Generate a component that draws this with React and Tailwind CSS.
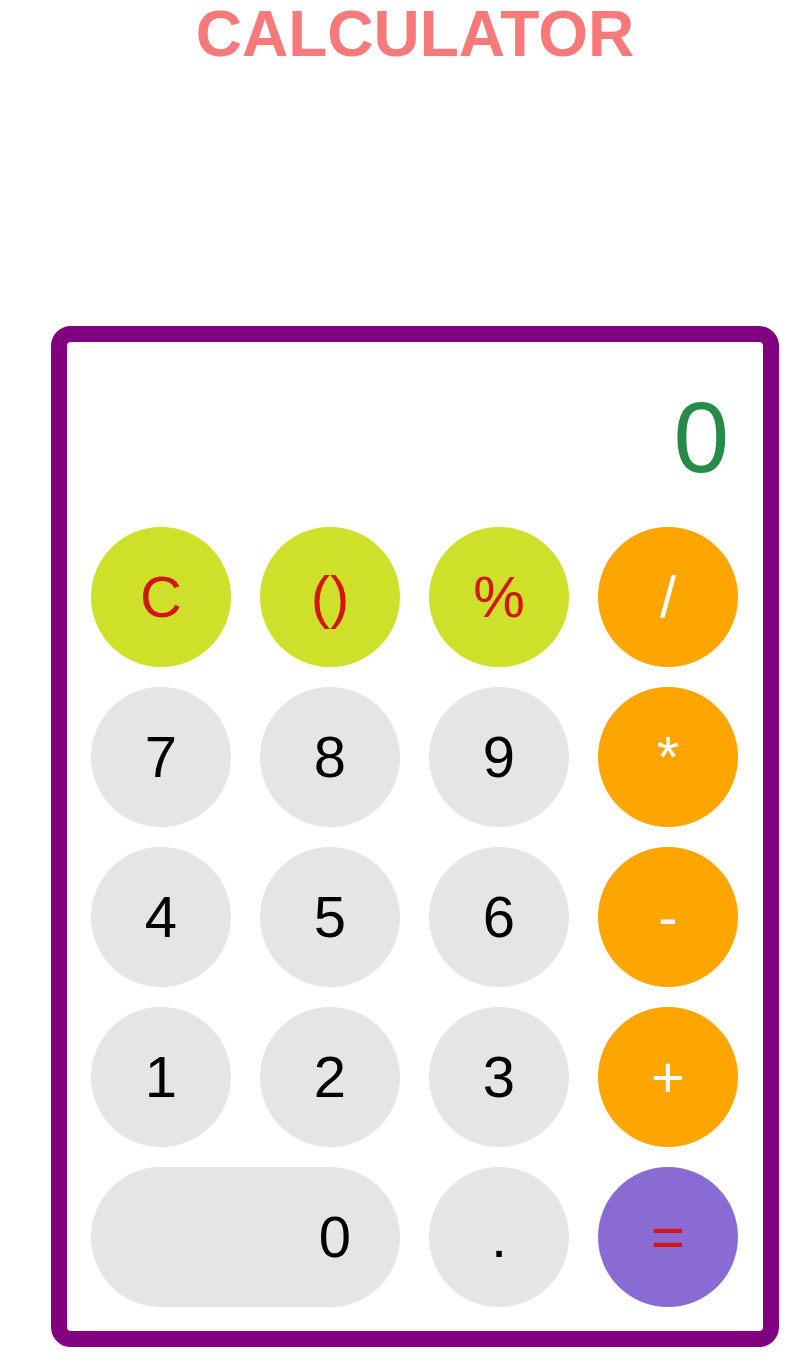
const KEYS = [
  { label: "C", kind: "fn" },
  { label: "()", kind: "fn" },
  { label: "%", kind: "fn" },
  { label: "/", kind: "op" },
  { label: "7", kind: "num" },
  { label: "8", kind: "num" },
  { label: "9", kind: "num" },
  { label: "*", kind: "op" },
  { label: "4", kind: "num" },
  { label: "5", kind: "num" },
  { label: "6", kind: "num" },
  { label: "-", kind: "op" },
  { label: "1", kind: "num" },
  { label: "2", kind: "num" },
  { label: "3", kind: "num" },
  { label: "+", kind: "op" },
  { label: "0", kind: "zero" },
  { label: ".", kind: "num" },
  { label: "=", kind: "eq" }
];

const KIND_CLASS = {
  fn: "bg-[#cfe02b] text-[#d51515] justify-center",
  op: "bg-[#ffa500] text-white justify-center",
  num: "bg-[#e5e5e5] text-black justify-center",
  zero: "col-span-2 bg-[#e5e5e5] text-black justify-end pr-[49px]",
  eq: "bg-[#8a6bd4] text-[#d51515] justify-center"
};

export default function App() {
  return (
    <div className="min-h-[1357px] w-[795px] bg-white font-['Liberation_Sans',Arial,sans-serif]">
      <div className="ml-[51px] w-[728px]">
        <h1 className="pt-[2px] text-center text-[64px] font-bold leading-[64px] text-[#f77979]">CALCULATOR</h1>

        <div className="mt-[260px] rounded-[20px] border-[16px] border-[#800080] bg-white">
          <div className="pt-[45px] pr-[34px] text-right text-[100px] leading-[100px] text-[#268b47]">0</div>

          <div className="mt-[40px] grid grid-cols-[repeat(4,140px)] auto-rows-[140px] gap-x-[29px] gap-y-[20px] pb-[24px] pl-[24px]">
            {KEYS.map((key) => (
              <button
                key={key.label}
                type="button"
                className={`flex items-center rounded-full text-[58px] leading-none ${KIND_CLASS[key.kind]}`}
              >
                {key.label}
              </button>
            ))}
          </div>
        </div>
      </div>
    </div>
  );
}
